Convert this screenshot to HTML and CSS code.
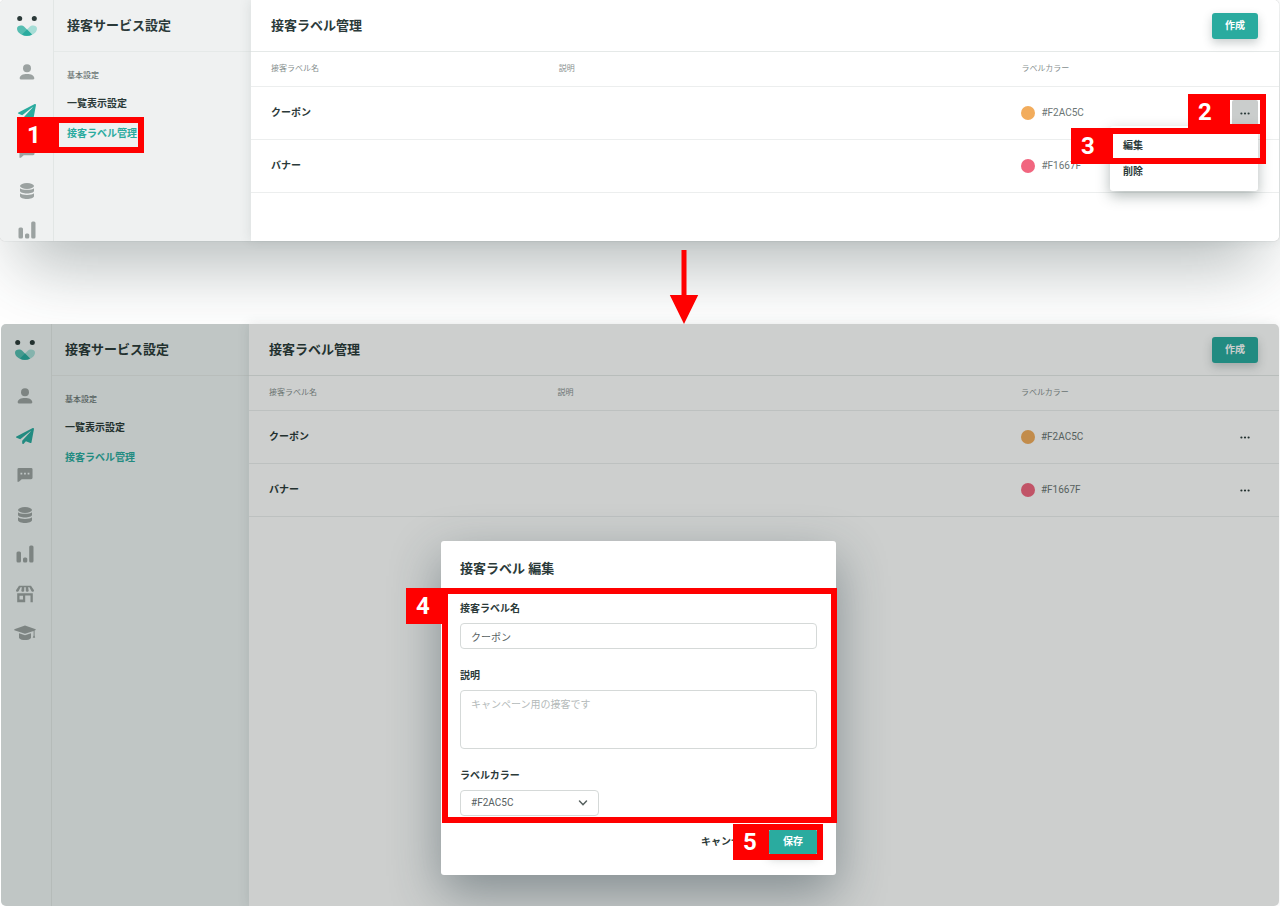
FILE: index.html
```html
<!DOCTYPE html>
<html lang="ja">
<head>
<meta charset="utf-8">
<meta name="viewport" content="width=device-width, initial-scale=1">
<title>接客ラベル管理</title>
<link rel="stylesheet" href="styles.css">
</head>
<body>
<svg class="sprite" aria-hidden="true">
  <symbol id="logo" viewBox="0 0 20 22">
    <circle cx="2.700" cy="3.500" r="2.500" fill="#2b3a39"/>
    <circle cx="17.300" cy="3.500" r="2.500" fill="#2b3a39"/>
    <path fill="#a6ddd6" d="M20 13.500C20 10.500 15 9.500 12.500 12L5 19.500C12 23.500 20 18.500 20 13.500Z"/>
    <path fill="#55bdb1" d="M0 13.500C0 10.500 5 9.500 7.500 12L15 19.500C8 23.500 0 18.500 0 13.500Z"/>
    <path fill="#2aab9f" d="M10 14.500L15 19.500C12 21.200 8 21.200 5 19.500Z"/>
  </symbol>
  <symbol id="user" viewBox="0 0 16 16">
    <circle cx="8" cy="4.300" r="4"/>
    <path d="M.7 14.300C.7 11.500 4 10 8 10s7.300 1.500 7.300 4.300c0 .7-.4 1.200-1 1.200H1.700c-.6 0-1-.5-1-1.200z"/>
  </symbol>
  <symbol id="plane" viewBox="0 0 512 512" preserveAspectRatio="none">
    <path d="M476 3.200L12.500 270.600c-18.100 10.400-15.800 35.600 2.200 43.200L121 358.400l287.300-253.200c5.500-4.900 13.300 2.600 8.600 8.300L176 407v80.500c0 23.600 28.500 32.900 42.500 15.800L282 426l124.600 52.200c14.200 6 30.400-2.900 33-18.200l72-432C515 7.800 493.300-6.800 476 3.200z"/>
  </symbol>
  <symbol id="chat" viewBox="0 0 17 16">
    <path fill-rule="evenodd" d="M2 .5h13A1.500 1.500 0 0 1 16.500 2v9a1.500 1.500 0 0 1-1.500 1.500H5L2 15.200H.5V2A1.500 1.500 0 0 1 2 .5zM3.700 5.700v1.800h1.900V5.700zm3.800 0v1.800h1.900V5.700zm3.800 0v1.800h1.900V5.700z"/>
  </symbol>
  <symbol id="database" viewBox="0 0 16 16">
    <ellipse cx="8" cy="3" rx="7" ry="2.900"/>
    <path d="M1 5.300C3 7.300 13 7.300 15 5.300v2.400c0 3.600-14 3.600-14 0zM1 10.300c2 2.200 12 2.200 14 0v2.600c0 4-14 4-14 0z"/>
  </symbol>
  <symbol id="chart" viewBox="0 0 18 18">
    <rect x=".5" y="6.500" width="4.500" height="11" rx="1.500"/>
    <rect x="7" y="12.500" width="4.300" height="5" rx="1.500"/>
    <rect x="13.200" y=".5" width="4.300" height="17" rx="1.500"/>
  </symbol>
  <symbol id="store" viewBox="0 0 18 18">
    <path fill-rule="evenodd" d="M3 .7h12L18 5.200c0 2-2.300 2-2.800.6L13.500 2.300h-1.400l.6 3.500c-.2 1.400-2.700 1.400-2.900 0V2.300H8.200v3.500c-.2 1.400-2.700 1.400-2.900 0l.6-3.500H4.500L2.800 5.800C2.300 7.200 0 7.200 0 5.200zM1.200 8.200h15.600v9.100h-2.300v-6.700H9.200v6.700h-8zm2.300 2.600v3.700H7v-3.700z"/>
  </symbol>
  <symbol id="cap" viewBox="0 0 22 16">
    <path d="M11 .5L.3 4.200v1L11 8.800l8.600-2.900v4.600l-.9 2.200h2.500l-.6-2.200V5.500l1.100-.4v-.9zM5 8.300v4.600c2.500 2.900 9.500 2.900 12 0V8.300L11 10.300z"/>
  </symbol>
  <symbol id="dots" viewBox="0 0 10 3">
    <circle cx="1.400" cy="1.500" r="1.100"/><circle cx="5" cy="1.500" r="1.100"/><circle cx="8.600" cy="1.500" r="1.100"/>
  </symbol>
</svg>

<div class="page">
  <section class="screen screen--list">
    <nav class="rail" aria-label="メイン">
      <svg class="rail__logo"><use href="#logo"/></svg>
      <ul class="rail__items">
        <li><svg class="icon-16"><use href="#user"/></svg></li>
        <li class="is-active"><svg class="icon-plane"><use href="#plane"/></svg></li>
        <li><svg class="icon-16"><use href="#chat"/></svg></li>
        <li><svg class="icon-16"><use href="#database"/></svg></li>
        <li><svg class="icon-18"><use href="#chart"/></svg></li>
      </ul>
    </nav>
    <aside class="side">
      <h2 class="bar title">接客サービス設定</h2>
      <p class="side__group">基本設定</p>
      <ul class="side__links">
        <li><a href="#">一覧表示設定</a></li>
        <li><a class="is-active" href="#">接客ラベル管理</a><span class="callout callout--nav"><b>1</b></span></li>
      </ul>
    </aside>
    <main class="main">
      <header class="bar">
        <h1 class="title">接客ラベル管理</h1>
        <button class="btn" type="button">作成</button>
      </header>
      <table class="labels">
        <colgroup><col class="col-name"><col class="col-desc"><col></colgroup>
        <thead><tr><th>接客ラベル名</th><th>説明</th><th>ラベルカラー</th></tr></thead>
        <tbody>
          <tr>
            <td>クーポン</td><td></td>
            <td>
              <div class="color">
                <span class="swatch swatch--orange"></span>#F2AC5C
                <div class="actions">
                  <button class="more is-open" type="button" aria-label="メニュー"><svg><use href="#dots"/></svg></button>
                  <div class="menu">
                    <button type="button">編集</button>
                    <button type="button">削除</button>
                    <span class="callout callout--edit"><b>3</b></span>
                  </div>
                  <span class="callout callout--more"><b>2</b></span>
                </div>
              </div>
            </td>
          </tr>
          <tr>
            <td>バナー</td><td></td>
            <td><div class="color"><span class="swatch swatch--pink"></span>#F1667F</div></td>
          </tr>
        </tbody>
      </table>
    </main>
  </section>

  <div class="step">
    <svg class="step__arrow" viewBox="0 0 30 76" aria-hidden="true"><path fill="#f00" d="M12.500 2h5v45h11.700L15 76 .8 47h11.700z"/></svg>
  </div>

  <section class="screen screen--edit">
    <nav class="rail" aria-label="メイン">
      <svg class="rail__logo"><use href="#logo"/></svg>
      <ul class="rail__items">
        <li><svg class="icon-16"><use href="#user"/></svg></li>
        <li class="is-active"><svg class="icon-plane"><use href="#plane"/></svg></li>
        <li><svg class="icon-16"><use href="#chat"/></svg></li>
        <li><svg class="icon-16"><use href="#database"/></svg></li>
        <li><svg class="icon-18"><use href="#chart"/></svg></li>
        <li><svg class="icon-18"><use href="#store"/></svg></li>
        <li><svg class="icon-cap"><use href="#cap"/></svg></li>
      </ul>
    </nav>
    <aside class="side">
      <h2 class="bar title">接客サービス設定</h2>
      <p class="side__group">基本設定</p>
      <ul class="side__links">
        <li><a href="#">一覧表示設定</a></li>
        <li><a class="is-active" href="#">接客ラベル管理</a></li>
      </ul>
    </aside>
    <main class="main">
      <header class="bar">
        <h1 class="title">接客ラベル管理</h1>
        <button class="btn" type="button">作成</button>
      </header>
      <table class="labels">
        <colgroup><col class="col-name"><col class="col-desc"><col></colgroup>
        <thead><tr><th>接客ラベル名</th><th>説明</th><th>ラベルカラー</th></tr></thead>
        <tbody>
          <tr>
            <td>クーポン</td><td></td>
            <td>
              <div class="color">
                <span class="swatch swatch--orange"></span>#F2AC5C
                <div class="actions"><button class="more" type="button" aria-label="メニュー"><svg><use href="#dots"/></svg></button></div>
              </div>
            </td>
          </tr>
          <tr>
            <td>バナー</td><td></td>
            <td>
              <div class="color">
                <span class="swatch swatch--pink"></span>#F1667F
                <div class="actions"><button class="more" type="button" aria-label="メニュー"><svg><use href="#dots"/></svg></button></div>
              </div>
            </td>
          </tr>
        </tbody>
      </table>
    </main>
    <div class="overlay">
      <form class="modal" role="dialog" aria-labelledby="modal-title">
        <h2 class="title" id="modal-title">接客ラベル 編集</h2>
        <div class="fields">
          <div class="field">
            <label for="label-name">接客ラベル名</label>
            <input id="label-name" type="text" value="クーポン">
          </div>
          <div class="field">
            <label for="label-desc">説明</label>
            <textarea id="label-desc" placeholder="キャンペーン用の接客です"></textarea>
          </div>
          <div class="field">
            <label for="label-color">ラベルカラー</label>
            <div class="select">
              <select id="label-color"><option>#F2AC5C</option><option>#F1667F</option></select>
              <svg viewBox="0 0 10 8" aria-hidden="true"><path d="M1.500 2L5 5.700 8.500 2"/></svg>
            </div>
          </div>
          <span class="callout callout--fields"><b>4</b></span>
        </div>
        <div class="modal__foot">
          <button class="btn btn--text" type="button">キャンセル</button>
          <div class="save">
            <button class="btn" type="submit">保存</button>
            <span class="callout callout--save"><b>5</b></span>
          </div>
        </div>
      </form>
    </div>
  </section>
</div>
</body>
</html>
```

FILE: styles.css
```css
*,
*::before,
*::after {
  box-sizing: border-box;
}

body {
  margin: 0;
  background: #fff;
  color: #2b3a39;
  font: 700 10px/14px Roboto, "Noto Sans CJK JP", sans-serif;
}

h1, h2, p, ul {
  margin: 0;
  padding: 0;
}

ul {
  list-style: none;
}

button, input, select, textarea {
  font: inherit;
  color: inherit;
}

.sprite {
  display: none;
}

.page {
  display: flex;
  flex-direction: column;
  min-height: 100vh;
}

/* Screens */
.screen {
  display: flex;
  position: relative;
  border-radius: 5px;
  margin-right: 1px;
  background: #fff;
}

.screen--list {
  box-shadow: 0 0 1px rgba(40, 60, 58, .4), 0 44px 64px -20px rgba(40, 60, 58, .34);
}

.screen--edit {
  flex: 1;
  margin-left: 1px;
}

.title {
  font-size: 13px;
  line-height: 18px;
}

.bar {
  display: flex;
  align-items: center;
  justify-content: space-between;
  height: 52px;
  border-bottom: 1px solid #e5e9e8;
}

/* Icon rail */
.rail {
  flex: none;
  width: 54px;
  padding: 15px 0 1px;
  border-right: 1px solid #e2e6e5;
  border-radius: 5px 0 0 5px;
  background: #eff1f1;
}

.screen--edit .rail {
  width: 51px;
  padding-right: 2px;
}

.screen--edit .rail,
.screen--edit .side {
  background: #eff4f4;
}

.rail__logo {
  display: block;
  width: 20px;
  height: 22px;
  margin: 0 auto 25px;
}

.rail__items {
  display: grid;
  gap: 20px;
  fill: #9ba2a1;
}

.rail__items li {
  display: flex;
  align-items: center;
  justify-content: center;
  height: 20px;
}

.rail__items li:nth-child(even) {
  height: 19px;
}

.rail__items .is-active {
  fill: #2aab9f;
}

.icon-16 { width: 16px; height: 16px; }
.icon-18 { width: 18px; height: 18px; }
.icon-plane { width: 18px; height: 16px; }
.icon-cap { width: 22px; height: 16px; }

/* Settings menu */
.side {
  flex: none;
  width: 197px;
  background: #eff1f1;
}

.side .bar {
  padding-left: 13px;
}

.side__group {
  padding: 18px 13px 7px;
  color: #6b7574;
  font-size: 8px;
  font-weight: 500;
  line-height: 12px;
}

.side__links li {
  position: relative;
  width: fit-content;
  margin-left: 13px;
}

.side__links a {
  display: block;
  color: inherit;
  line-height: 30px;
  text-decoration: none;
}

.side__links .is-active {
  color: #2aab9f;
}

/* Label list */
.main {
  flex: 1;
  min-width: 0;
  position: relative;
  border-radius: 0 5px 5px 0;
  background: #fff;
  box-shadow: -1px 0 12px rgba(40, 60, 58, .1);
}

.main .bar {
  padding: 0 21px 0 20px;
}

.btn {
  height: 26px;
  padding: 0 13px;
  border: 0;
  border-radius: 3px;
  background: #2aab9f;
  box-shadow: 0 4px 10px rgba(40, 60, 58, .25);
  color: #fff;
  cursor: pointer;
}

.btn--text {
  padding: 0;
  background: none;
  box-shadow: none;
  color: #2b3a39;
}

.labels {
  width: 100%;
  border-collapse: separate;
  border-spacing: 0;
  table-layout: fixed;
}

.col-name { width: 28%; }
.col-desc { width: 45%; }

.labels th,
.labels td {
  padding: 0 0 0 20px;
  border-bottom: 1px solid #eceeee;
  text-align: left;
}

.labels th {
  height: 35px;
  color: #87908f;
  font-size: 8px;
  font-weight: 400;
}

.labels td {
  height: 53px;
}

.color {
  display: flex;
  align-items: center;
  gap: 6px;
  color: #6b7574;
  font-weight: 400;
}

.swatch {
  width: 14px;
  height: 14px;
  border-radius: 50%;
}

.swatch--orange { background: #f2ac5c; }
.swatch--pink { background: #f1667f; }

.actions {
  position: relative;
  margin: 0 21px 0 auto;
}

.more {
  display: flex;
  align-items: center;
  justify-content: center;
  width: 26px;
  height: 26px;
  padding: 0;
  border: 0;
  border-radius: 2px;
  background: none;
  fill: #2b3a39;
}

.more.is-open {
  background: #cacdcc;
}

.more svg {
  width: 10px;
  height: 3px;
}

.menu {
  position: absolute;
  top: 26px;
  right: 0;
  width: 148px;
  padding: 7px 0 6px;
  border-radius: 3px;
  background: #fff;
  box-shadow: 0 5px 14px rgba(40, 60, 58, .35);
  color: #2b3a39;
}

.menu button {
  display: block;
  width: 100%;
  height: 26px;
  padding: 0 13px;
  border: 0;
  background: none;
  font-weight: 700;
  text-align: left;
}

/* Arrow between the screens */
.step {
  display: flex;
  justify-content: center;
  align-items: flex-end;
  height: 83px;
  padding-left: 88px;
}

.step__arrow {
  position: relative;
  width: 30px;
  height: 76px;
}

/* Edit dialog */
.overlay {
  position: absolute;
  inset: 0;
  display: flex;
  justify-content: center;
  align-items: flex-start;
  padding: 217px 23px 31px 20px;
  border-radius: 5px;
  background: rgba(5, 15, 12, .2);
}

.modal {
  width: 395px;
  padding: 19px 19px 20px;
  border-radius: 3px;
  background: #fff;
  box-shadow: 0 18px 50px rgba(40, 60, 68, .45);
}

.fields {
  display: grid;
  gap: 20px;
  position: relative;
  margin-top: 24px;
}

.field {
  display: grid;
  gap: 7px;
}

.field input,
.field textarea,
.field select {
  display: block;
  width: 100%;
  height: 26px;
  padding: 0 10px;
  border: 1px solid #d5d9d8;
  border-radius: 4px;
  background: #fff;
  color: #56605f;
  font-weight: 400;
  outline: 0;
}

.field textarea {
  height: 59px;
  padding: 7px 10px;
  resize: none;
}

.field textarea::placeholder {
  color: #b4baba;
}

.field select {
  appearance: none;
}

.select {
  position: relative;
  width: 139px;
}

.select svg {
  position: absolute;
  top: 9px;
  right: 11px;
  width: 10px;
  height: 8px;
  fill: none;
  stroke: #56605f;
  stroke-width: 1.5;
  stroke-linecap: round;
  pointer-events: none;
}

.modal__foot {
  display: flex;
  justify-content: flex-end;
  gap: 18px;
  margin-top: 13px;
}

.save {
  position: relative;
}

.save .btn {
  padding: 0 14px;
}

/* Numbered step markers */
.callout {
  position: absolute;
  border: 6px solid #f00;
  pointer-events: none;
}

.callout b {
  position: absolute;
  top: -6px;
  right: calc(100% + 6px);
  width: 36px;
  height: 36px;
  padding-right: 2px;
  background: #f00;
  color: #fff;
  font-size: 24px;
  font-weight: 700;
  line-height: 36px;
  text-align: center;
}

.callout--nav { inset: -2px -7px -4px -14px; }
.callout--more { inset: -6px -8px -4px; }
.callout--edit { inset: 2px -8px 27px -3px; }
.callout--fields { inset: -14px -20px -7px -18px; }
.callout--save { inset: -5px -6px; }
.callout--save b { right: 100%; }
```
